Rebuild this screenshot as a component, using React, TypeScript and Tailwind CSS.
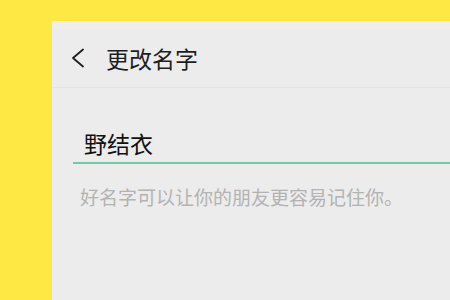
export default function App() {
  return (
    <div
      className="w-[450px] h-[300px] bg-[#fee843] pl-[52px] pt-[21px] flex flex-col overflow-hidden"
      style={{ fontFamily: '"Noto Sans CJK SC", "Noto Sans", sans-serif' }}
    >
      <div className="flex-1 bg-[#ececec] flex flex-col">
        <div className="h-[8px] bg-[#efeeea]" />
        <div className="h-[59px] flex items-center border-b border-[#e4e4e4]">
          <svg width="14" height="20" viewBox="0 0 14 20" className="ml-[19px] mr-[21px]">
            <polyline
              points="12,1.5 2,10 12,18.5"
              fill="none"
              stroke="#1e1e1e"
              strokeWidth="1.8"
              strokeLinecap="round"
              strokeLinejoin="round"
            />
          </svg>
          <span className="text-[23px] leading-[30px] text-[#1e1e1e]">更改名字</span>
        </div>
        <div className="ml-[21px] mt-[40px] h-[36px] border-b-2 border-[#72c9a6] flex items-start">
          <span className="pl-[11px] text-[23px] leading-[30px] text-[#111]">野结衣</span>
        </div>
        <div className="ml-[28px] mt-[21px] text-[19px] leading-[24px] text-[#b3b3b3]">
          好名字可以让你的朋友更容易记住你。
        </div>
      </div>
    </div>
  );
}
